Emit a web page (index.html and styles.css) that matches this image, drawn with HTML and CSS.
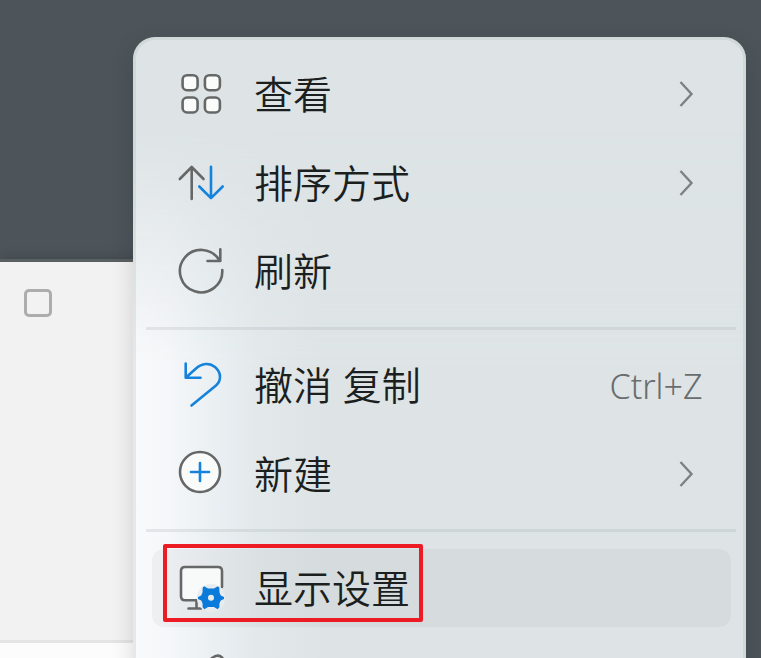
FILE: index.html
```html
<!DOCTYPE html>
<html lang="zh-CN">
<head>
<meta charset="utf-8">
<title>桌面菜单</title>
<link rel="stylesheet" href="styles.css">
</head>
<body>
<div class="desktop">
  <section class="window">
    <div class="window-body"><span class="checkbox"></span></div>
    <div class="window-footer"></div>
  </section>

  <nav class="menu">
    <div class="item">
      <svg class="icon" viewBox="0 0 52 52"><g class="filled"><rect x="6.6" y="7.2" width="15" height="15" rx="4.5"/><rect x="28.9" y="7.2" width="15" height="15" rx="4.5"/><rect x="6.6" y="29.5" width="15" height="15" rx="4.5"/><rect x="28.9" y="29.5" width="15" height="15" rx="4.5"/></g></svg>
      <span class="label">查看</span>
      <svg class="chevron" viewBox="0 0 16 28"><path d="M2.5 2 13.5 14 2.5 26"/></svg>
    </div>
    <div class="item">
      <svg class="icon" viewBox="0 0 52 52"><path d="M15.7 42V10M3.8 22 15.7 10 27.5 22"/><path class="blue" d="M35 9.8V41M23.3 29.5 35 41.2 46.7 29.5"/></svg>
      <span class="label">排序方式</span>
      <svg class="chevron" viewBox="0 0 16 28"><path d="M2.5 2 13.5 14 2.5 26"/></svg>
    </div>
    <div class="item">
      <svg class="icon" viewBox="0 0 52 52"><path d="M46.3 25A21.2 21.2 0 1 1 43.3 15.2M44.3 4.3V16H31.5"/></svg>
      <span class="label">刷新</span>
    </div>
    <div class="separator"></div>
    <div class="item">
      <svg class="icon" viewBox="0 0 52 52"><path class="blue" d="M9.7 4.5V18.7H24.5M9.7 18.7 20 9.5C26 4 33.5 3.5 39 8C45.5 13.5 45.5 21.500 40 26.5L15.5 46.5"/></svg>
      <span class="label">撤消 复制</span>
      <span class="shortcut">Ctrl+Z</span>
    </div>
    <div class="item">
      <svg class="icon" viewBox="0 0 52 52"><circle class="filled" cx="24" cy="24" r="20"/><path class="blue" d="M24 15V33M15 24H33"/></svg>
      <span class="label">新建</span>
      <svg class="chevron" viewBox="0 0 16 28"><path d="M2.5 2 13.5 14 2.5 26"/></svg>
    </div>
    <div class="separator"></div>
    <div class="item active">
      <svg class="icon" viewBox="0 0 52 52"><path class="screen" d="M46 28V9Q46 5 42 5H9Q5 5 5 9V34Q5 38 9 38H27Z"/><path d="M46 25V9Q46 5 42 5H9Q5 5 5 9V34Q5 38.3 9 38.3H20.5V46.5M12.5 46.5H25"/><circle class="halo" cx="35" cy="36" r="14"/><path class="gear" d="M28.2 24.2 32 26.4H38L41.8 24.2 43.3 25.5 43.5 30.4 44.8 33.4 48 35V37L44.8 38.6 43.5 41.2 43.3 45.5 41.5 47.3 38 45H32L28.5 47.3 26.7 45.5 26.5 41.2 25.2 38.6 22 37V35L25.2 33.4 26.5 30.4 26.7 25.5ZM35 32.8A3 3 0 1 0 35 38.8 3 3 0 1 0 35 32.8Z"/></svg>
      <span class="label">显示设置</span>
      <span class="callout"></span>
    </div>
    <div class="item">
      <svg class="icon" viewBox="0 0 52 52"><path d="M4 46 10 32 36 8Q42 3.5 46 7.5Q49 12 44 17L19 41Z"/></svg>
    </div>
  </nav>
</div>
</body>
</html>
```
FILE: styles.css
```css
* { box-sizing: border-box; }
body { margin: 0; overflow: hidden; }

.desktop {
  position: relative;
  width: 761px;
  height: 658px;
  overflow: hidden;
  background: #4d545a;
  font-family: "Noto Sans CJK SC", sans-serif;
}

.window {
  position: absolute;
  left: 0;
  top: 259px;
  width: 160px;
  height: 399px;
  border-top: 3px solid #5a6061;
  background: #f2f2f2;
  display: flex;
  flex-direction: column;
  box-shadow: 0 0 12px rgba(0, 0, 0, .2);
}
.window-body { height: 378px; padding: 27px 24px; }
.checkbox {
  display: block;
  width: 28px;
  height: 28px;
  border: 3px solid #adadad;
  border-radius: 5px;
}
.window-footer { flex: 1; border-top: 3px solid #e4e4e4; background: #fcfcfc; }

.menu {
  position: absolute;
  left: 133px;
  top: 36.5px;
  width: 612.5px;
  height: 700px;
  padding-top: 13.5px;
  border-radius: 22px;
  background: #dee4e6;
  box-shadow: 0 8px 24px rgba(0, 0, 0, .14);
  isolation: isolate;
}
/* Light bleeding through from the window underneath. */
.menu::before {
  content: "";
  position: absolute;
  inset: 0;
  z-index: -1;
  border-radius: inherit;
  background: linear-gradient(90deg, #f9fafb 0, #f5f7f9 35px, #e9eff2 85px, #e3e9eb 125px, #dee4e6 190px);
  -webkit-mask-image: linear-gradient(180deg, transparent 90px, rgba(0, 0, 0, .2) 150px, rgba(0, 0, 0, .55) 230px, #000 330px);
  mask-image: linear-gradient(180deg, transparent 90px, rgba(0, 0, 0, .2) 150px, rgba(0, 0, 0, .55) 230px, #000 330px);
}
.menu::after {
  content: "";
  position: absolute;
  inset: 0;
  border: 3.5px solid rgba(160, 175, 170, .22);
  border-radius: inherit;
  pointer-events: none;
}

.item {
  position: relative;
  display: flex;
  align-items: center;
  height: 88.5px;
  padding: 0 43px;
}
.separator {
  height: 3px;
  margin: 11px 9.5px 11.5px 13px;
  background: rgba(150, 160, 160, .2);
}
.active::before {
  content: "";
  position: absolute;
  inset: 5px 14.5px 5px 19px;
  z-index: -1;
  border-radius: 12px;
  background: rgba(100, 105, 110, .06);
}
.label {
  margin-left: 26px;
  padding-bottom: 4px;
  font-size: 39px;
  line-height: 56px;
  font-weight: 350;
  word-spacing: 2px;
  color: #1c1f20;
  white-space: nowrap;
}
.shortcut {
  margin-left: auto;
  padding-top: 1px;
  font: 350 34px/48px "Noto Sans", sans-serif;
  color: #686d6e;
}
.chevron {
  width: 16px;
  height: 28px;
  margin-left: auto;
  margin-right: 8.5px;
  fill: none;
  stroke: #7c8182;
  stroke-width: 2.4;
}

.icon {
  flex: none;
  width: 52px;
  height: 52px;
  fill: none;
  stroke: #666868;
  stroke-width: 2.6;
  stroke-linecap: round;
  stroke-linejoin: round;
}
.filled { fill: #fafbfb; }
.blue { stroke: #1583dc; }
.screen { fill: #f8f9f9; stroke: none; }
.halo { fill: #e9ecee; stroke: none; }
.gear { fill: #0b7bdb; fill-rule: evenodd; stroke: none; }

.callout {
  position: absolute;
  left: 30px;
  top: 0;
  width: 260px;
  height: 78.5px;
  border: 4px solid #ed1c24;
  border-radius: 2px;
}
```
